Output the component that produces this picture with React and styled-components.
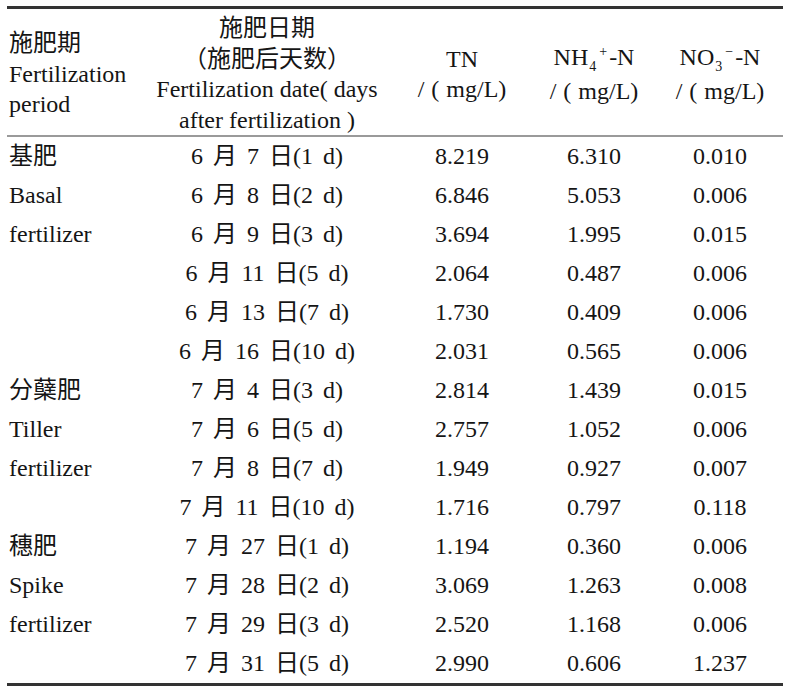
import React from 'react';
import styled, { createGlobalStyle } from 'styled-components';

const GlobalStyle = createGlobalStyle`
  html, body {
    margin: 0;
    padding: 0;
    background: #ffffff;
  }
  body {
    font-family: 'Liberation Serif', 'Noto Sans CJK SC', serif;
    color: #151515;
  }
`;

const COLS = '143px 234px 156px 108px 135px';

const Table = styled.div`
  width: 776px;
  margin: 6px 0 0 7px;
  border-top: 3px solid #333;
  border-bottom: 3px solid #333;
  font-size: 24px;
`;

const HeaderRow = styled.div`
  display: grid;
  grid-template-columns: ${COLS};
  height: 128px;
  box-sizing: border-box;
  padding-top: 4px;
  align-items: center;
  border-bottom: 2px solid #9a9a9a;
  line-height: 30.5px;
`;

const Row = styled.div`
  display: grid;
  grid-template-columns: ${COLS};
  height: 39px;
  align-items: center;
  line-height: 39px;
`;

const Cell = styled.div`
  text-align: ${(p) => (p.$left ? 'left' : 'center')};
  padding-left: ${(p) => p.$pad || 0}px;
  white-space: nowrap;
`;

const DateText = styled.span`
  word-spacing: 4px;
`;

const Sub = styled.span`
  font-size: 14px;
  position: relative;
  top: 6px;
  margin-left: 1px;
`;

const Sup = styled.span`
  font-size: 14px;
  position: relative;
  top: -9px;
  margin: 0 2px 0 3px;
`;

const UnitLine = styled.div`
  word-spacing: 1px;
`;

const rows = [
  ['基肥', '6 月 7 日(1 d)', '8.219', '6.310', '0.010'],
  ['Basal', '6 月 8 日(2 d)', '6.846', '5.053', '0.006'],
  ['fertilizer', '6 月 9 日(3 d)', '3.694', '1.995', '0.015'],
  ['', '6 月 11 日(5 d)', '2.064', '0.487', '0.006'],
  ['', '6 月 13 日(7 d)', '1.730', '0.409', '0.006'],
  ['', '6 月 16 日(10 d)', '2.031', '0.565', '0.006'],
  ['分蘖肥', '7 月 4 日(3 d)', '2.814', '1.439', '0.015'],
  ['Tiller', '7 月 6 日(5 d)', '2.757', '1.052', '0.006'],
  ['fertilizer', '7 月 8 日(7 d)', '1.949', '0.927', '0.007'],
  ['', '7 月 11 日(10 d)', '1.716', '0.797', '0.118'],
  ['穗肥', '7 月 27 日(1 d)', '1.194', '0.360', '0.006'],
  ['Spike', '7 月 28 日(2 d)', '3.069', '1.263', '0.008'],
  ['fertilizer', '7 月 29 日(3 d)', '2.520', '1.168', '0.006'],
  ['', '7 月 31 日(5 d)', '2.990', '0.606', '1.237'],
];

const Unit = () => <UnitLine>/ ( mg/L)</UnitLine>;

export default function App() {
  return (
    <>
      <GlobalStyle />
      <Table>
        <HeaderRow>
          <Cell $left $pad={2}>
            <div>施肥期</div>
            <div>Fertilization</div>
            <div>period</div>
          </Cell>
          <Cell>
            <div>施肥日期</div>
            <div>（施肥后天数）</div>
            <div>Fertilization date( days</div>
            <div>after fertilization )</div>
          </Cell>
          <Cell>
            <div>TN</div>
            <Unit />
          </Cell>
          <Cell>
            <div>
              NH<Sub>4</Sub>
              <Sup>+</Sup>-N
            </div>
            <Unit />
          </Cell>
          <Cell $pad={9}>
            <div>
              NO<Sub>3</Sub>
              <Sup>−</Sup>-N
            </div>
            <Unit />
          </Cell>
        </HeaderRow>
        {rows.map((r, i) => (
          <Row key={i}>
            <Cell $left $pad={2}>{r[0]}</Cell>
            <Cell>
              <DateText>{r[1]}</DateText>
            </Cell>
            <Cell>{r[2]}</Cell>
            <Cell>{r[3]}</Cell>
            <Cell $pad={9}>{r[4]}</Cell>
          </Row>
        ))}
      </Table>
    </>
  );
}
